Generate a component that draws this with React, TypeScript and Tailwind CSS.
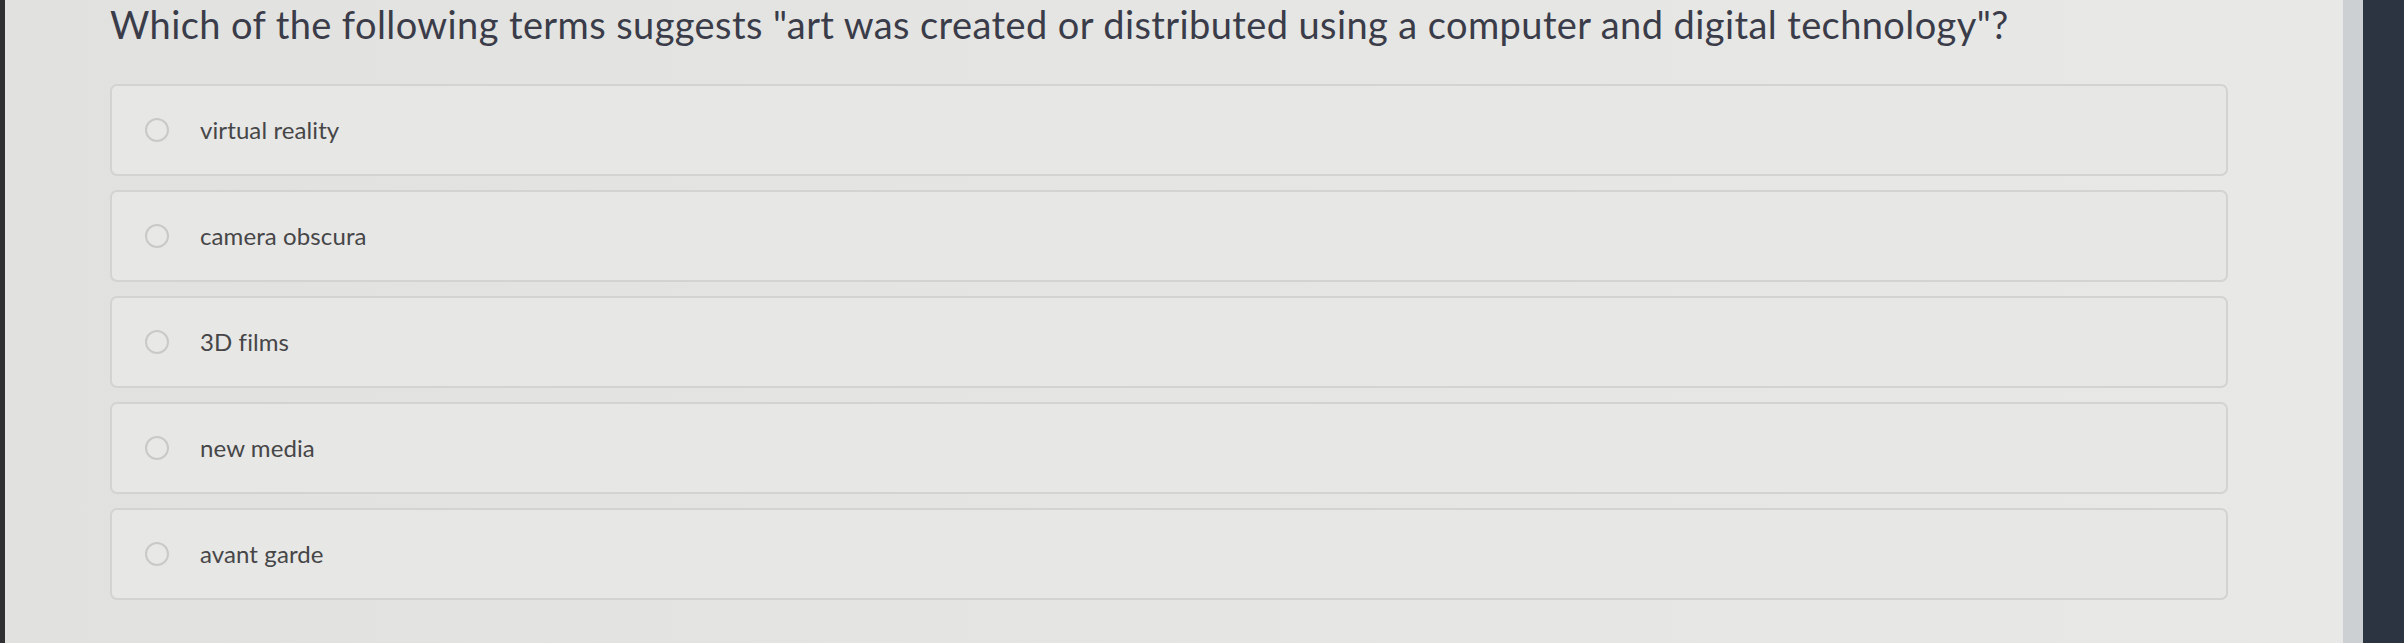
import React from 'react';

const OPTIONS = ['virtual reality', 'camera obscura', '3D films', 'new media', 'avant garde'];

const Radio: React.FC = () => (
  <span className="block w-[24px] h-[24px] shrink-0 rounded-full border-2 border-[#c9c9c7] bg-[#e8e8e6]" />
);

const Option: React.FC<{ label: string }> = ({ label }) => (
  <label className="flex items-center h-[92px] pl-[33px] rounded-[7px] border-2 border-[#d3d3d1] bg-[#e7e7e5] cursor-pointer">
    <Radio />
    <span className="ml-[31px] text-[24px] text-[#464648] tracking-[0.1px]">{label}</span>
  </label>
);

export default function App() {
  return (
    <div className="flex w-full h-[643px] overflow-hidden font-['Lato','Liberation_Sans',sans-serif]">
      <div className="w-[5px] bg-[#2f3032]" />

      <main className="flex-1 bg-gradient-to-r from-[#e1e1df] via-[#e5e5e3] to-[#e8e8e6] pl-[105px] pr-[115px] pt-[2px]">
        <h1 className="text-[38px] leading-[44px] text-[#3a3c49] tracking-[0.4px] whitespace-nowrap">
          Which of the following terms suggests "art was created or distributed using a computer and digital technology"?
        </h1>

        <div className="mt-[38px] flex flex-col gap-[14px]">
          {OPTIONS.map((opt) => (
            <Option key={opt} label={opt} />
          ))}
        </div>
      </main>

      <div className="w-[20px] bg-[#cdd0d3]" />
      <div className="w-[41px] bg-[#2b3440]" />
    </div>
  );
}
